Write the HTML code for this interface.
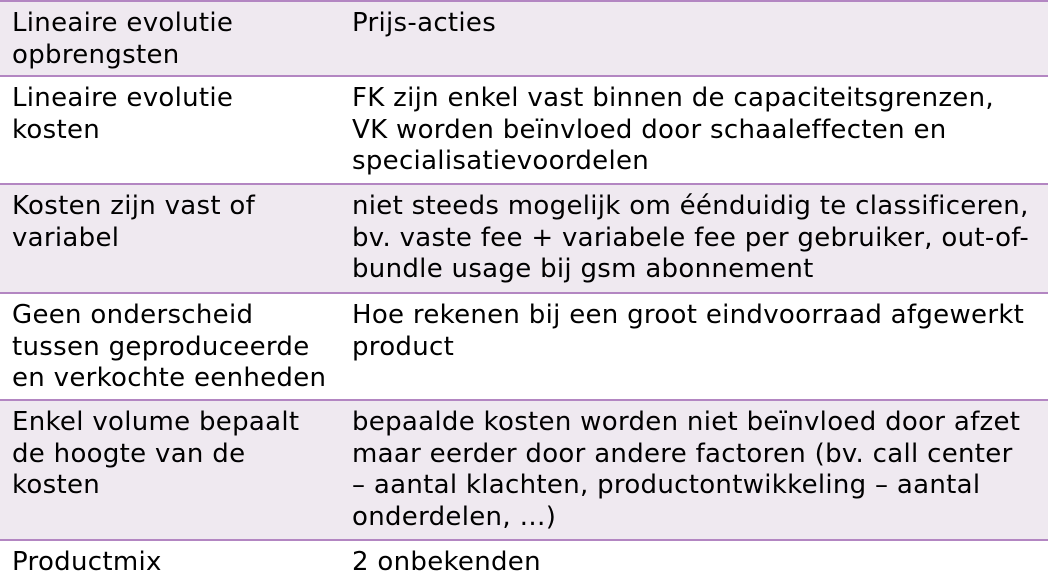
<!DOCTYPE html>
<html><head><meta charset="utf-8"><style>
html,body{margin:0;padding:0;width:1048px;height:583px;overflow:hidden;background:#fff}
body{font-family:"DejaVu Sans","Liberation Sans",sans-serif;font-size:26px;letter-spacing:0.3px;color:#000}
.r{position:absolute;left:0;width:1048px;border-top:2px solid #b386c2;box-sizing:border-box}
.a{background:#efe9f0}
.c{position:absolute;white-space:nowrap;line-height:31.5px;top:6px}
.c1{left:12px}.c2{left:352px}
</style></head><body>
<div class="r a" style="top:0;height:75px"><div class="c c1">Lineaire evolutie<br>opbrengsten</div><div class="c c2">Prijs-acties</div></div>
<div class="r" style="top:75px;height:108px"><div class="c c1">Lineaire evolutie<br>kosten</div><div class="c c2">FK zijn enkel vast binnen de capaciteitsgrenzen,<br>VK worden beïnvloed door schaaleffecten en<br>specialisatievoordelen</div></div>
<div class="r a" style="top:183px;height:109px"><div class="c c1">Kosten zijn vast of<br>variabel</div><div class="c c2">niet steeds mogelijk om éénduidig te classificeren,<br>bv. vaste fee + variabele fee per gebruiker, out-of-<br>bundle usage bij gsm abonnement</div></div>
<div class="r" style="top:292px;height:107px"><div class="c c1">Geen onderscheid<br>tussen geproduceerde<br>en verkochte eenheden</div><div class="c c2">Hoe rekenen bij een groot eindvoorraad afgewerkt<br>product</div></div>
<div class="r a" style="top:399px;height:140px"><div class="c c1">Enkel volume bepaalt<br>de hoogte van de<br>kosten</div><div class="c c2">bepaalde kosten worden niet beïnvloed door afzet<br>maar eerder door andere factoren (bv. call center<br>– aantal klachten, productontwikkeling – aantal<br>onderdelen, …)</div></div>
<div class="r" style="top:539px;height:44px"><div class="c c1">Productmix</div><div class="c c2">2 onbekenden</div></div>
</body></html>
